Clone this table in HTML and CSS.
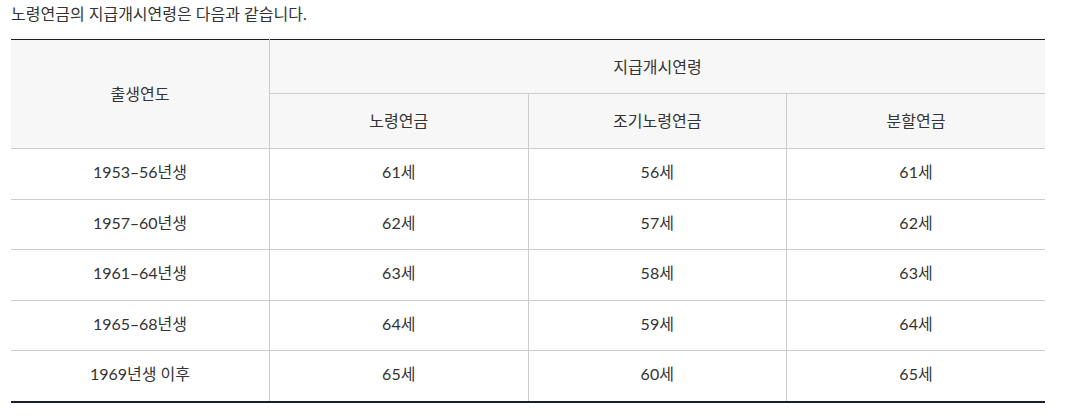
FILE: index.html
```html
<!DOCTYPE html>
<html lang="ko">
<head>
<meta charset="utf-8">
<link rel="stylesheet" href="styles.css">
</head>
<body>
<p class="intro">노령연금의 지급개시연령은 다음과 같습니다.</p>
<table class="age-table">
  <thead>
    <tr>
      <th rowspan="2" class="h-tall">출생연도</th>
      <th colspan="3" class="h-row">지급개시연령</th>
    </tr>
    <tr>
      <th class="h-row2">노령연금</th>
      <th class="h-row2">조기노령연금</th>
      <th class="h-row2">분할연금</th>
    </tr>
  </thead>
  <tbody>
    <tr><td>1953<span class="dash">-</span>56년생</td><td>61세</td><td>56세</td><td>61세</td></tr>
    <tr><td>1957<span class="dash">-</span>60년생</td><td>62세</td><td>57세</td><td>62세</td></tr>
    <tr><td>1961<span class="dash">-</span>64년생</td><td>63세</td><td>58세</td><td>63세</td></tr>
    <tr><td>1965<span class="dash">-</span>68년생</td><td>64세</td><td>59세</td><td>64세</td></tr>
    <tr><td>1969년생 이후</td><td>65세</td><td>60세</td><td>65세</td></tr>
  </tbody>
</table>
</body>
</html>
```
FILE: styles.css
```css
html, body {
  margin: 0;
  padding: 0;
  background: #fff;
}
body {
  padding: 0 11px;
  font-family: Lato, "Noto Sans CJK KR", sans-serif;
  font-size: 16px;
  color: #333;
}
.intro {
  margin: 0;
  padding-top: 3px;
  height: 36px;
  line-height: 22px;
}
.age-table {
  width: 1034px;
  border-collapse: collapse;
  table-layout: fixed;
  border-top: 1px solid #1b1d30;
  border-bottom: 2px solid #1b1d30;
}
.age-table th,
.age-table td {
  text-align: center;
  vertical-align: middle;
  font-weight: normal;
  padding: 0;
  border: 1px solid #cccccc;
  line-height: 20px;
}
.age-table td {
  padding-bottom: 3px;
  height: 46.5px;
}
.dash {
  display: inline-block;
  width: 9px;
  text-align: center;
  transform: scaleX(1.6);
}
.age-table th:first-child,
.age-table td:first-child {
  border-left: none;
}
.age-table th:last-child,
.age-table td:last-child {
  border-right: none;
}
.age-table tr:first-child th.h-row {
  border-right: none;
}
.age-table thead tr:nth-child(2) th:last-child {
  border-right: none;
}
.age-table thead th {
  background: #f7f7f7;
  border-top: none;
}
.h-row { height: 53px; }
.h-row2 { height: 54px; padding-bottom: 1px; }
.age-table tbody tr:last-child td { border-bottom: none; }
```
